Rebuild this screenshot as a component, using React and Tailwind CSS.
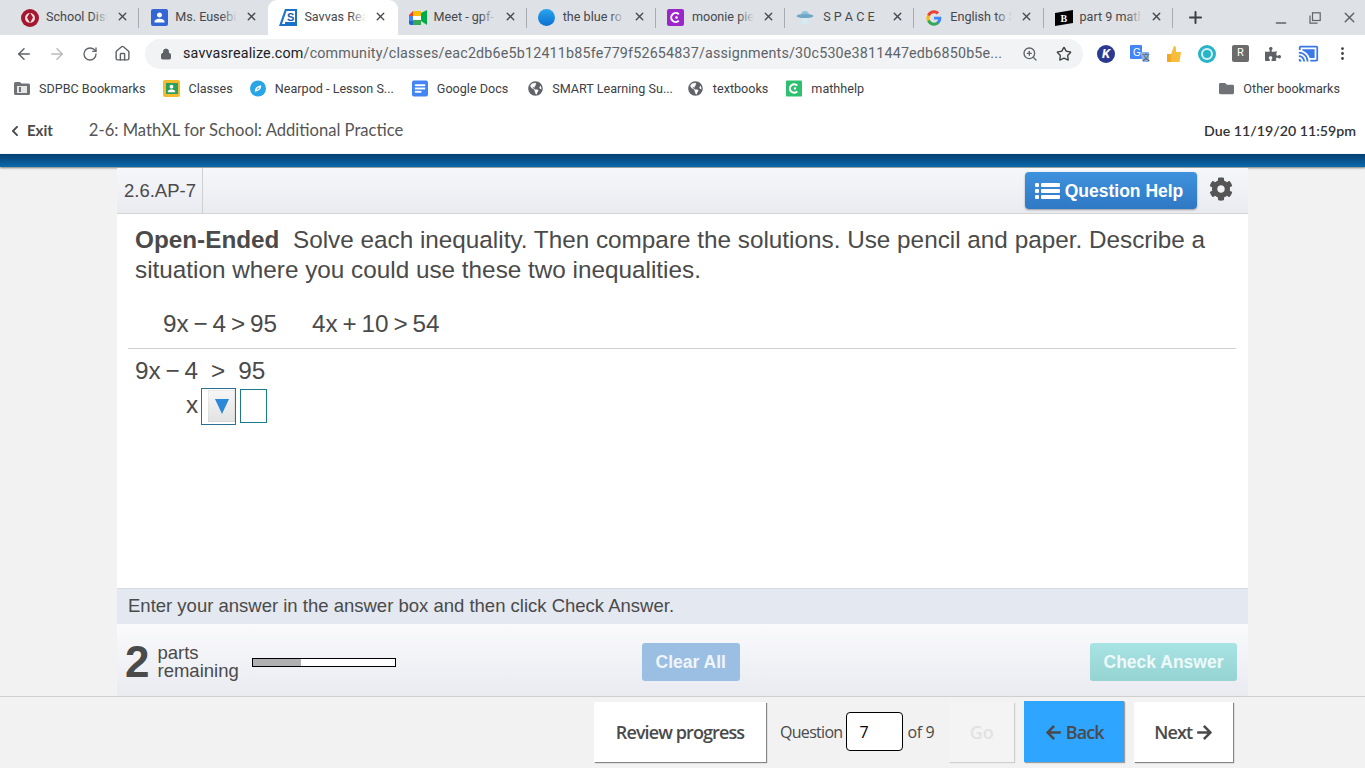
import { ArrowLeft, ArrowRight, RotateCw, Home, Lock, ZoomIn, Star, MoreVertical, Plus, Minus, X } from "lucide-react";
import { FaCog, FaArrowLeft, FaArrowRight, FaChevronLeft, FaGlobeAmericas, FaPuzzlePiece, FaFolder } from "react-icons/fa";
import { MdCastConnected, MdPerson } from "react-icons/md";

function DistrictIcon() {
  return (
    <svg width="18" height="18" viewBox="0 0 18 18">
      <circle cx="9" cy="9" r="9" fill="#a5172f" />
      <circle cx="9" cy="9" r="5" fill="#f4dfe0" />
      <path d="M9 3.5 12 8.5 9 14 6 8.5Z" fill="#a5172f" />
    </svg>
  );
}

function ClassroomPerson() {
  return (
    <div className="flex h-[17px] w-[17px] items-center justify-center rounded-[2px] bg-[#3367d6]">
      <MdPerson size={15} color="#fff" />
    </div>
  );
}

function SavvasIcon() {
  return (
    <svg width="18" height="18" viewBox="0 0 18 18">
      <path d="M0 17 6 0H18V17Z" fill="#1a73c8" />
      <path d="M3 15 7.5 2H16V15Z" fill="#fff" />
      <rect x="6" y="13" width="10" height="2" fill="#1a73c8" />
      <text x="8" y="12" fontSize="11" fontWeight="700" fill="#1a5fa8" fontFamily="Liberation Sans">S</text>
    </svg>
  );
}

function MeetIcon() {
  return (
    <svg width="18" height="16" viewBox="0 0 18 16">
      <path d="M4 1H12V6H4Z" fill="#fbbc04" />
      <path d="M0 5 4 1V6H0Z" fill="#ea4335" />
      <path d="M0 6H4V11H0Z" fill="#4285f4" />
      <path d="M0 11H4V15H2Q0 15 0 13Z" fill="#1967d2" />
      <path d="M4 10H12V15H4Z" fill="#34a853" />
      <path d="M12 3 18 0V15L12 11Z" fill="#00ac47" />
      <rect x="4" y="6" width="8" height="4" fill="#fff" />
    </svg>
  );
}

function BlueDot() {
  return <div className="h-[17px] w-[17px] rounded-full bg-gradient-to-b from-[#2aa5ee] to-[#0b6fd0]" />;
}

function MoonieIcon() {
  return (
    <svg width="17" height="17" viewBox="0 0 17 17">
      <rect width="17" height="17" rx="2" fill="#9b27c9" />
      <path d="M11.8 5.2A4.5 4.5 0 1 0 11.8 11.8" fill="none" stroke="#fff" strokeWidth="2" />
      <circle cx="9.5" cy="8.5" r="1.3" fill="#fff" />
    </svg>
  );
}

function SaucerIcon() {
  return (
    <svg width="18" height="16" viewBox="0 0 18 16">
      <path d="M5 5A4 4 0 0 1 13 5Z" fill="#8fc4dc" />
      <ellipse cx="9" cy="6" rx="8.5" ry="2" fill="#6fa8c4" />
      <path d="M6 8H12L13 14H5Z" fill="#d5eaf2" />
    </svg>
  );
}

function GoogleIcon() {
  return (
    <svg width="16" height="16" viewBox="0 0 48 48">
      <path fill="#4285F4" d="M46 24.5c0-1.600-.1-3.100-.4-4.500H24v8.500h12.300c-.5 2.900-2.100 5.300-4.500 6.900v5.700h7.300C43.400 36.700 46 31.100 46 24.500z" />
      <path fill="#34A853" d="M24 47c6.200 0 11.300-2 15.100-5.500l-7.300-5.700c-2 1.400-4.600 2.200-7.800 2.200-6 0-11-4-12.800-9.500H3.700v5.900C7.500 41.900 15.200 47 24 47z" />
      <path fill="#FBBC05" d="M11.200 28.500c-.5-1.400-.7-2.900-.7-4.500s.3-3.100.7-4.500v-5.900H3.700C2.300 16.700 1 20.200 1 24s1.300 7.300 2.700 10.400z" />
      <path fill="#EA4335" d="M24 10c3.400 0 6.400 1.200 8.800 3.400l6.500-6.500C35.300 3.200 30.200 1 24 1 15.200 1 7.500 6.100 3.700 13.600l7.500 5.900C13 14 18 10 24 10z" />
    </svg>
  );
}

function BrainlyIcon() {
  return (
    <svg width="18" height="16" viewBox="0 0 18 16">
      <path d="M0 3 18 0V13L0 16Z" fill="#000" />
      <text x="5.500" y="12" fontSize="10" fontWeight="700" fill="#fff" fontFamily="Liberation Serif">B</text>
    </svg>
  );
}

function ListIcon() {
  return (
    <svg width="25" height="16" viewBox="0 0 25 16" className="mr-[5px]" fill="#fff">
      <rect x="0" y="0" width="4" height="4" rx="1" />
      <rect x="0" y="6" width="4" height="4" rx="1" />
      <rect x="0" y="12" width="4" height="4" rx="1" />
      <rect x="6" y="0" width="19" height="4" rx="1" />
      <rect x="6" y="6" width="19" height="4" rx="1" />
      <rect x="6" y="12" width="19" height="4" rx="1" />
    </svg>
  );
}

const TABS = [
  { title: "School Dist", icon: <DistrictIcon /> },
  { title: "Ms. Eusebi", icon: <ClassroomPerson /> },
  { title: "Savvas Rea", icon: <SavvasIcon />, active: true },
  { title: "Meet - gpf-", icon: <MeetIcon /> },
  { title: "the blue ro", icon: <BlueDot /> },
  { title: "moonie pie", icon: <MoonieIcon /> },
  { title: "S P A C E", icon: <SaucerIcon />, spaced: true },
  { title: "English to S", icon: <GoogleIcon /> },
  { title: "part 9 math", icon: <BrainlyIcon /> },
];

const BOOKMARKS = [
  { label: "SDPBC Bookmarks", gap: "mr-[18px] -ml-px", icon: (
    <svg width="16" height="13" viewBox="0 0 16 13"><path d="M0 1.500Q0 0 1.500 0H6L7.500 1.500H14.500Q16 1.500 16 3V11.500Q16 13 14.500 13H1.500Q0 13 0 11.500Z" fill="#6f7276" /><rect x="3" y="4" width="10" height="7" fill="#e6e6e6" /><rect x="5" y="5" width="2" height="5" fill="#6f7276" /></svg>
  ) },
  { label: "Classes", gap: "mr-[17px]", icon: (
    <div className="flex h-[17px] w-[17px] shrink-0 items-center justify-center rounded-[2px] bg-[#f4bb2e]"><div className="flex h-[11px] w-[12px] items-center justify-center bg-[#2c9f5a]"><MdPerson size={11} color="#fff" /></div></div>
  ) },
  { label: "Nearpod - Lesson S...", gap: "mr-[18px]", icon: (
    <svg width="17" height="17" viewBox="0 0 17 17"><circle cx="8.500" cy="8.500" r="8.500" fill="#27a5e6" /><path d="M5 12Q5 6 12 5 12 11 5 12Z" fill="#fff" /><path d="M7 10Q7.500 8 10 7 9.500 9.500 7 10Z" fill="#27a5e6" /></svg>
  ) },
  { label: "Google Docs", gap: "mr-[19px]", icon: (
    <svg width="17" height="17" viewBox="0 0 17 17"><rect width="17" height="17" rx="2" fill="#4285f4" /><rect x="3" y="4" width="11" height="2" fill="#fff" /><rect x="3" y="7.500" width="11" height="2" fill="#fff" /><rect x="3" y="11" width="7" height="2" fill="#fff" /></svg>
  ) },
  { label: "SMART Learning Su...", gap: "mr-[15px]", icon: <FaGlobeAmericas size={15} color="#5f6368" /> },
  { label: "textbooks", gap: "mr-[18px]", icon: <FaGlobeAmericas size={15} color="#5f6368" /> },
  { label: "mathhelp", gap: "", icon: (
    <svg width="17" height="17" viewBox="0 0 17 17"><rect width="17" height="17" rx="1" fill="#2fbf71" /><path d="M12 5.500A4.500 4.500 0 1 0 12 11.500" fill="none" stroke="#fff" strokeWidth="2" /><circle cx="9.500" cy="8.500" r="1.200" fill="#fff" /></svg>
  ) },
];

function Tab({ tab }) {
  return (
    <div className={`relative flex h-[35px] w-[129.2px] shrink-0 items-center pl-[11px] ${tab.active ? "rounded-t-[9px] bg-white" : ""}`}>
      <div className="flex w-[18px] shrink-0 items-center justify-center">{tab.icon}</div>
      <div className={`relative ml-[7px] w-[62px] overflow-hidden whitespace-nowrap pb-px text-[12.6px] text-[#45484c] ${tab.spaced ? "pl-[2px]" : ""}`}>
        {tab.title}
        {!tab.spaced && (
          <div className={`absolute inset-y-0 right-0 w-[16px] bg-gradient-to-r from-transparent ${tab.active ? "to-white" : "to-[#dee1e6]"}`} />
        )}
      </div>
      <X size={13} strokeWidth={2.500} className="absolute left-[106px] top-[10px] text-[#45484c]" />
    </div>
  );
}

export default function App() {
  return (
    <div className="flex h-[768px] w-[1365px] flex-col overflow-hidden bg-[#f2f2f2] font-['Roboto',sans-serif]">
      {/* tab strip */}
      <div className="flex h-[35px] shrink-0 items-center bg-[#dee1e6] pl-[10px]">
        {TABS.map((tab, i) => (
          <div key={tab.title} className="flex items-center">
            <Tab tab={tab} />
            {i !== 1 && i !== 2 && <div className="-ml-px h-[20px] w-px bg-[#a8abb0]" />}
          </div>
        ))}
        <Plus size={19} strokeWidth={2.500} className="ml-[13px] text-[#3c4043]" />
        <div className="ml-auto flex items-center">
          <Minus size={16} className="mt-[10px] text-[#5f6368]" />
          <svg width="12" height="12" viewBox="0 0 12 12" className="ml-[20px] text-[#5f6368]" fill="none" stroke="currentColor" strokeWidth="1.200">
            <rect x="3.500" y="0.800" width="7.700" height="7.700" />
            <path d="M1 3.500V11.200H8.500" />
          </svg>
          <X size={17} className="ml-[20px] mr-[7px] text-[#5f6368]" />
        </div>
      </div>

      {/* toolbar */}
      <div className="flex h-[36px] shrink-0 items-center bg-white pl-[15px] pt-px">
        <ArrowLeft size={18} className="text-[#5f6368]" />
        <ArrowRight size={18} className="ml-[15px] text-[#b9bbbe]" />
        <RotateCw size={16} className="ml-[16px] text-[#5f6368]" />
        <Home size={17} className="ml-[16px] text-[#5f6368]" />
        <div className="ml-[14px] flex h-[30px] w-[938px] items-center rounded-full bg-[#f1f3f4] pl-[15px]">
          <Lock size={12} fill="#5f6368" className="text-[#5f6368]" />
          <div className="ml-[11px] w-[822px] overflow-hidden whitespace-nowrap text-[14.3px] tracking-[0.18px] text-[#5f6368]">
            <span className="text-[#202124]">savvasrealize.com</span>/community/classes/eac2db6e5b12411b85fe779f52654837/assignments/30c530e3811447edb6850b5e...
          </div>
          <ZoomIn size={16} className="ml-[17px] text-[#5f6368]" />
          <Star size={16} className="ml-[18px] text-[#3c4043]" />
        </div>
        <div className="ml-[14px] flex h-[18px] w-[18px] items-center justify-center rounded-full bg-[#2b3990] text-[13px] font-bold italic text-white">K</div>
        <svg width="20" height="18" viewBox="0 0 20 18" className="ml-[15px]"><rect width="12" height="14" rx="1" fill="#4285f4" /><text x="3" y="11" fontSize="10" fill="#fff" fontFamily="Liberation Sans">G</text><path d="M10 7H19V17H13Z" fill="#8ab0e8" /><text x="12" y="15" fontSize="8" fill="#555" fontFamily="Noto Sans CJK SC">文</text></svg>
        <svg width="18" height="18" viewBox="0 0 18 18" className="ml-[15px]"><path d="M2 9H6V17H2Z" fill="#f2a922" /><path d="M6 9 9 1Q11 1 11 3V7H16L14.500 17H6Z" fill="#f7bd3b" /></svg>
        <svg width="18" height="18" viewBox="0 0 18 18" className="ml-[15px]"><circle cx="9" cy="9" r="9" fill="#27b4c9" /><circle cx="9" cy="9" r="5" fill="none" stroke="#d6f2f6" strokeWidth="2" /><circle cx="9" cy="9" r="2" fill="#27b4c9" /></svg>
        <div className="ml-[16px] flex h-[17px] w-[17px] items-center justify-center rounded-[2px] bg-[#6b6b6b] text-[11px] text-white">R</div>
        <FaPuzzlePiece size={16} color="#5f6368" className="ml-[16px]" />
        <MdCastConnected size={21} color="#3b78e7" className="ml-[17px]" />
        <MoreVertical size={17} className="ml-[15px] text-[#3c4043]" />
      </div>

      {/* bookmarks */}
      <div className="flex h-[35px] shrink-0 items-center bg-white pl-[15px] pt-px text-[12.6px] text-[#3c4043]">
        {BOOKMARKS.map((b) => (
          <div key={b.label} className={`flex items-center ${b.gap}`}>
            <div className="flex w-[16px] items-center justify-center">{b.icon}</div>
            <span className="ml-[9px] whitespace-nowrap">{b.label}</span>
          </div>
        ))}
        <div className="ml-auto mr-[25px] flex items-center">
          <FaFolder size={15} color="#6f7276" />
          <span className="ml-[9px]">Other bookmarks</span>
        </div>
      </div>

      {/* assignment header */}
      <div className="flex h-[48px] shrink-0 items-center bg-white pl-[9px] pr-[9px] pt-px font-['Lato',sans-serif]">
        <FaChevronLeft size={12} color="#4a4a4a" />
        <span className="ml-[6px] text-[15px] font-bold text-[#4a4a4a]">Exit</span>
        <span className="ml-[36px] text-[16.6px] text-[#555]">2-6: MathXL for School: Additional Practice</span>
        <span className="ml-auto text-[14.2px] font-semibold text-[#333]">Due 11/19/20 11:59pm</span>
      </div>
      <div className="h-[13px] shrink-0 bg-gradient-to-b from-[#063f70] to-[#0a69ad] shadow-[0_1px_2px_rgba(0,0,0,0.5)]" />

      {/* question panel */}
      <div className="mx-[117px] mt-px flex min-h-0 flex-1 flex-col bg-white font-['Liberation_Sans',sans-serif] text-[#4a4a4a]">
        <div className="flex h-[46px] shrink-0 items-center border-b border-[#d4d4d4] bg-gradient-to-b from-[#f6f7fa] to-[#e9ebf1]">
          <div className="flex h-full w-[86px] items-center border-r border-[#cfcfcf] pl-[7px] text-[18.5px]">2.6.AP-7</div>
          <div className="ml-auto flex h-[37px] w-[172px] items-center justify-center rounded-[4px] bg-gradient-to-b from-[#3f92dd] to-[#2f78c4] pr-[4px] pt-px text-[17.5px] font-bold text-white shadow-[0_1px_2px_rgba(0,0,0,0.35)]">
            <ListIcon />
            Question Help
          </div>
          <FaCog size={24} color="#555" className="ml-[12px] mr-[15px] -translate-y-[2px]" />
        </div>

        <div className="flex-1 pl-[11px] pr-[12px]">
          <p className="pl-[7px] pt-[11px] text-[24.3px] leading-[30px]">
            <span className="font-bold">Open-Ended</span>&nbsp; Solve each inequality. Then compare the solutions. Use pencil and paper. Describe a situation where you could use these two inequalities.
          </p>
          <div className="mt-[22px] flex h-[34px] items-center pl-[35px] text-[24.3px] [word-spacing:-1.9px]">
            <span>9x − 4 &gt; 95</span>
            <span className="ml-[35px]">4x + 10 &gt; 54</span>
          </div>
          <div className="mt-[7px] h-px bg-[#d0d0d0]" />
          <div className="mt-[7px] flex pl-[7px] text-[24.3px] leading-[30px] [word-spacing:-1.9px]">
            <span>9x − 4</span>
            <span className="ml-[13px]">&gt;</span>
            <span className="ml-[13px]">95</span>
          </div>
          <div className="mt-px flex items-center pl-[58px] text-[24.3px]">
            <span className="mb-[2px]">x</span>
            <div className="ml-[3px] flex h-[37px] w-[35px] items-center justify-end border border-[#2a6f8f] bg-white">
              <div className="flex h-[32px] w-[27px] items-center justify-center rounded-[1px] bg-gradient-to-b from-[#f7f7f7] to-[#e2e2e2] shadow-[inset_0_0_1px_#888]">
                <svg width="14" height="15" viewBox="0 0 14 15"><path d="M0 0H14L7 15Z" fill="#2b87d8" /></svg>
              </div>
            </div>
            <div className="ml-[4px] h-[34px] w-[27px] border border-[#1b7a8c] bg-white" />
          </div>
        </div>

        <div className="flex h-[36px] shrink-0 items-center border-t border-[#d6dae2] bg-[#e4e8f0] pb-[2px] pl-[11px] text-[18.5px]">
          Enter your answer in the answer box and then click Check Answer.
        </div>

        <div className="flex h-[72px] shrink-0 items-center bg-gradient-to-b from-[#fafafc] to-[#e9ebf1] pl-[8px] pr-[11px] pt-[4px]">
          <span className="text-[44px] font-bold leading-none">2</span>
          <div className="ml-[8px] text-[18.5px] leading-[18px]">
            <div>parts</div>
            <div>remaining</div>
          </div>
          <div className="ml-[13px] h-[9px] w-[144px] border border-black bg-white">
            <div className="h-full w-[48px] bg-[#b0b0b0]" />
          </div>
          <div className="ml-[246px] flex h-[38px] w-[98px] items-center justify-center rounded-[3px] bg-[#9bbfe3] text-[17.5px] font-bold text-[#f0f5fb]">Clear All</div>
          <div className="ml-auto flex h-[38px] w-[147px] items-center justify-center rounded-[3px] bg-gradient-to-b from-[#a9e4e4] to-[#95d2d2] text-[17.5px] font-bold text-[#eefafa]">Check Answer</div>
        </div>
      </div>

      {/* bottom nav */}
      <div className="flex h-[72px] shrink-0 items-center border-t border-[#cfcfcf] bg-[#f2f2f2] pb-[2px] pl-[594px] font-['Open_Sans',sans-serif] text-[#4a4a4a]">
        <div className="flex h-[60px] w-[172px] items-center justify-center bg-white pt-[2px] text-[18px] font-semibold tracking-[-0.9px] shadow-[1px_1px_1px_rgba(0,0,0,0.45)]">Review progress</div>
        <span className="ml-[14px] text-[16px] tracking-[-0.7px]">Question</span>
        <div className="ml-[4px] flex h-[39px] w-[57px] items-center rounded-[4px] border border-black bg-white pl-[12px] text-[16px] text-black">7</div>
        <span className="ml-[4px] text-[16px] tracking-[-0.4px]">of 9</span>
        <div className="ml-[15px] flex h-[60px] w-[65px] items-center justify-center bg-[#f4f4f4] pt-[2px] text-[18px] font-semibold text-[#e2e2e2] shadow-[1px_1px_1px_rgba(0,0,0,0.15)]">Go</div>
        <div className="ml-[10px] flex h-[61px] w-[100px] items-center justify-center bg-[#2ea6ff] pt-[2px] text-[18px] font-semibold tracking-[-0.9px] shadow-[1px_1px_1px_rgba(0,0,0,0.35)]">
          <FaArrowLeft size={17} className="mr-[4px]" />Back
        </div>
        <div className="ml-[10px] flex h-[60px] w-[99px] items-center justify-center bg-white pt-[2px] text-[18px] font-semibold tracking-[-0.9px] shadow-[1px_1px_1px_rgba(0,0,0,0.45)]">
          Next<FaArrowRight size={17} className="ml-[4px]" />
        </div>
      </div>
    </div>
  );
}
